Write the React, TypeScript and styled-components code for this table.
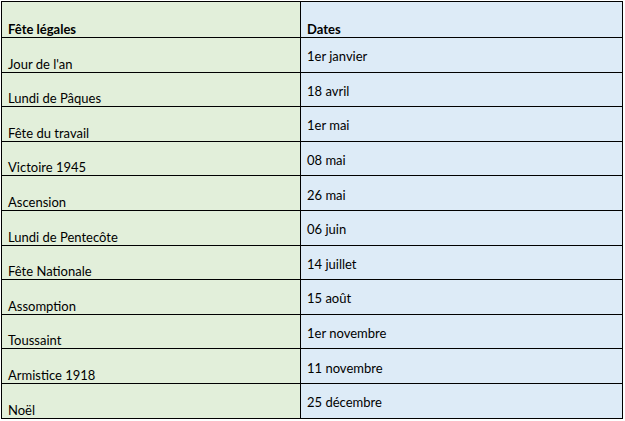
import styled, { createGlobalStyle } from "styled-components";

const holidays: [string, string][] = [
    ["Jour de l'an", "1er janvier"],
    ["Lundi de Pâques", "18 avril"],
    ["Fête du travail", "1er mai"],
    ["Victoire 1945", "08 mai"],
    ["Ascension", "26 mai"],
    ["Lundi de Pentecôte", "06 juin"],
    ["Fête Nationale", "14 juillet"],
    ["Assomption", "15 août"],
    ["Toussaint", "1er novembre"],
    ["Armistice 1918", "11 novembre"],
    ["Noël", "25 décembre"],
];

export default function App() {
    return (
        <>
            <GlobalStyle />
            <Page>
                <Table>
                    <colgroup>
                        <col style={{ width: 299 }} />
                        <col />
                    </colgroup>
                    <thead>
                        <HeadRow>
                            <Cell $tone="green" $align="bottom"><b>Fête légales</b></Cell>
                            <Cell $tone="blue" $align="bottom"><b>Dates</b></Cell>
                        </HeadRow>
                    </thead>
                    <tbody>
                        {holidays.map(([name, date]) => (
                            <Row key={name}>
                                <Cell $tone="green" $align="bottom">{name}</Cell>
                                <Cell $tone="blue" $align="middle">{date}</Cell>
                            </Row>
                        ))}
                    </tbody>
                </Table>
            </Page>
        </>
    );
}

const GlobalStyle = createGlobalStyle`
    body {
        margin: 0;
        background: #ffffff;
        font-family: Lato, "Open Sans", sans-serif;
    }
`;

const Page = styled.div`
    padding: 1px 0 0 1px;
    width: 625px;
    height: 421px;
    box-sizing: border-box;
`;

const Table = styled.table`
    border-collapse: collapse;
    table-layout: fixed;
    width: 622px;
    height: 417px;
`;

const HeadRow = styled.tr`
    height: 36px;
`;

const Row = styled.tr`
    height: 34.6px;
`;

const Cell = styled.td<{ $tone: "green" | "blue"; $align: "bottom" | "middle" }>`
    border: 1.5px solid #000;
    background: ${(p) => (p.$tone === "green" ? "#e2efda" : "#ddebf7")};
    vertical-align: ${(p) => p.$align};
    padding: ${(p) => (p.$align === "middle" ? "3px 6px 0" : "0 6px 0")};
    font-size: 13px;
    color: #000;
    white-space: nowrap;
    line-height: 16px;

    b {
        font-weight: 700;
    }
`;
